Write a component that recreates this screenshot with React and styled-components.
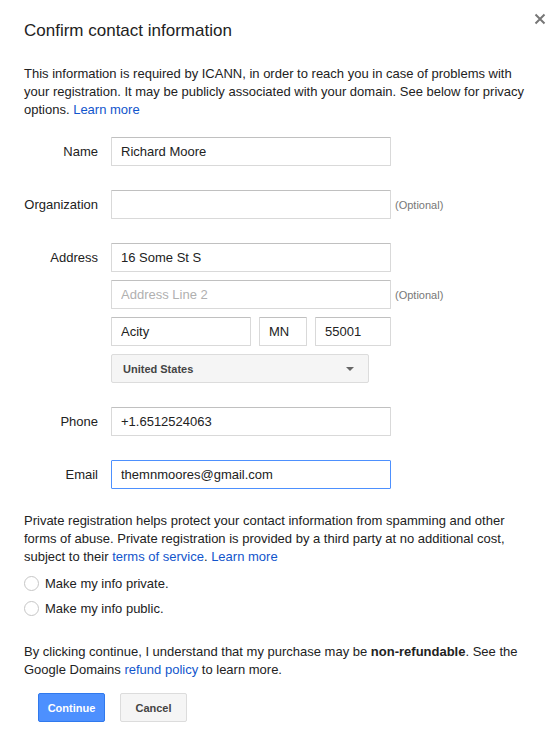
import React from "react";
import styled, { createGlobalStyle } from "styled-components";

const Global = createGlobalStyle`
  body {
    margin: 0;
    background: #fff;
    font-family: "Liberation Sans", Arial, sans-serif;
    color: #222;
  }
`;

const Dialog = styled.div`
  position: relative;
  width: 560px;
  box-sizing: border-box;
  padding: 19px 24px 10px;
  font-size: 13px;
  line-height: 18px;
`;

const Close = styled.button`
  position: absolute;
  top: 13px;
  right: 14px;
  width: 12px;
  height: 12px;
  padding: 0;
  border: none;
  background: none;
  cursor: pointer;
`;

const Title = styled.h1`
  margin: 0;
  font-size: 17px;
  font-weight: normal;
  line-height: 24px;
  color: #222;
`;

const Para = styled.p`
  margin: ${(p) => p.$top || 0}px 0 0;
  width: 500px;
`;

const Link = styled.a`
  color: #15c;
  text-decoration: none;
`;

const Form = styled.div`
  display: flex;
  flex-direction: column;
  gap: 24px;
  margin-top: 18px;
`;

const Row = styled.div`
  display: flex;
  align-items: flex-start;
  gap: 13px;
`;

const Label = styled.label`
  width: 74px;
  text-align: right;
  line-height: 29px;
  color: #222;
`;

const Stack = styled.div`
  display: flex;
  flex-direction: column;
  gap: 8px;
`;

const Line = styled.div`
  display: flex;
  align-items: center;
  gap: 8px;
`;

const Input = styled.input`
  box-sizing: border-box;
  width: ${(p) => p.$w || 280}px;
  height: 29px;
  padding: 0 9px;
  border: 1px solid ${(p) => (p.$focus ? "#4d90fe" : "#d9d9d9")};
  border-top-color: ${(p) => (p.$focus ? "#4d90fe" : "#c0c0c0")};
  border-radius: 1px;
  font-family: inherit;
  font-size: 13px;
  color: #222;
  outline: none;
  background: #fff;

  &::placeholder {
    color: #b0b0b0;
  }
`;

const Optional = styled.span`
  margin-left: -4px;
  font-size: 11px;
  color: #777;
`;

const Select = styled.div`
  box-sizing: border-box;
  width: 258px;
  height: 29px;
  display: flex;
  align-items: center;
  justify-content: space-between;
  padding: 0 12px 0 11px;
  background: #f5f5f5;
  border: 1px solid #dcdcdc;
  border-radius: 2px;
  font-size: 11px;
  font-weight: bold;
  color: #444;
`;

const Arrow = styled.span`
  width: 0;
  height: 0;
  border-left: 4px solid transparent;
  border-right: 4px solid transparent;
  border-top: 4px solid #666;
  margin-right: 2px;
`;

const Radios = styled.div`
  display: flex;
  flex-direction: column;
  margin-top: 5px;
`;

const RadioRow = styled.label`
  display: flex;
  align-items: center;
  gap: 6px;
  height: 25px;
`;

const Circle = styled.span`
  box-sizing: border-box;
  width: 15px;
  height: 15px;
  border-radius: 50%;
  border: 1px solid #c6c6c6;
  background: #fff;
`;

const Actions = styled.div`
  display: flex;
  gap: 15px;
  margin: 14px 0 0 14px;
`;

const Button = styled.button`
  box-sizing: border-box;
  width: 67px;
  height: 29px;
  border-radius: 2px;
  font-family: inherit;
  font-size: 11px;
  font-weight: bold;
  border: 1px solid ${(p) => (p.$primary ? "#3079ed" : "#dcdcdc")};
  background: ${(p) => (p.$primary ? "#4d90fe" : "#f5f5f5")};
  color: ${(p) => (p.$primary ? "#fff" : "#444")};
  cursor: pointer;
`;

export default function App() {
  return (
    <>
      <Global />
      <Dialog>
        <Close aria-label="Close">
          <svg width="12" height="12" viewBox="0 0 12 12">
            <path d="M1.5 1.5L10.5 10.5M10.5 1.5L1.5 10.5" stroke="#777" strokeWidth="2" />
          </svg>
        </Close>
        <Title>Confirm contact information</Title>
        <Para $top={22}>
          This information is required by ICANN, in order to reach you in case of problems with
          your registration. It may be publicly associated with your domain. See below for privacy
          options. <Link href="#">Learn more</Link>
        </Para>

        <Form>
          <Row>
            <Label>Name</Label>
            <Input defaultValue="Richard Moore" />
          </Row>
          <Row>
            <Label>Organization</Label>
            <Line>
              <Input />
              <Optional>(Optional)</Optional>
            </Line>
          </Row>
          <Row>
            <Label>Address</Label>
            <Stack>
              <Input defaultValue="16 Some St S" />
              <Line>
                <Input placeholder="Address Line 2" />
                <Optional>(Optional)</Optional>
              </Line>
              <Line>
                <Input $w={140} defaultValue="Acity" />
                <Input $w={48} defaultValue="MN" />
                <Input $w={76} defaultValue="55001" />
              </Line>
              <Select>
                United States
                <Arrow />
              </Select>
            </Stack>
          </Row>
          <Row>
            <Label>Phone</Label>
            <Input defaultValue="+1.6512524063" />
          </Row>
          <Row>
            <Label>Email</Label>
            <Input $focus defaultValue="themnmoores@gmail.com" />
          </Row>
        </Form>

        <Para $top={23}>
          Private registration helps protect your contact information from spamming and other
          forms of abuse. Private registration is provided by a third party at no additional cost,
          subject to their <Link href="#">terms of service</Link>. <Link href="#">Learn more</Link>
        </Para>
        <Radios>
          <RadioRow>
            <Circle />
            Make my info private.
          </RadioRow>
          <RadioRow>
            <Circle />
            Make my info public.
          </RadioRow>
        </Radios>

        <Para $top={22}>
          By clicking continue, I understand that my purchase may be <b>non-refundable</b>. See the
          Google Domains <Link href="#">refund policy</Link> to learn more.
        </Para>

        <Actions>
          <Button $primary>Continue</Button>
          <Button>Cancel</Button>
        </Actions>
      </Dialog>
    </>
  );
}
